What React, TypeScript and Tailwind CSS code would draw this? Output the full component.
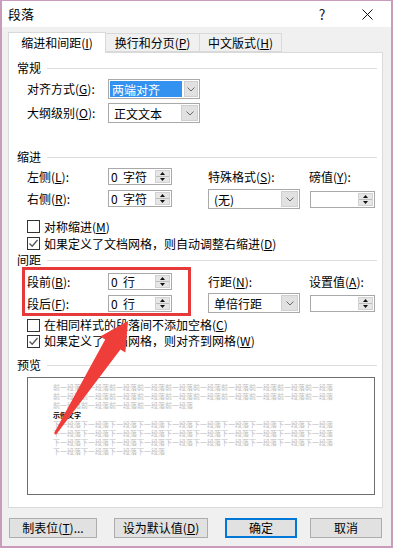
import React from "react";

const font = "font-['Noto_Sans_CJK_SC','Noto_Sans',sans-serif]";

const Key = ({ k }: { k: string }) => (
  <>
    (<u className="underline-offset-[1px]">{k}</u>)
  </>
);

const Header = ({ label, className = "" }: { label: string; className?: string }) => (
  <div className={`flex items-center h-[14px] ml-[8px] mr-[5px] ${className}`}>
    <span className="text-[12px] leading-[14px] text-black">{label}</span>
    <div className="flex-1 h-px bg-[#dedede] ml-[6px]" />
  </div>
);

const Chevron = () => (
  <svg width="8" height="5" viewBox="0 0 8 5">
    <polyline points="0.5,0.5 4,4 7.5,0.5" fill="none" stroke="#6a6a6a" strokeWidth="1" />
  </svg>
);

const Select = ({ value, active = false }: { value: string; active?: boolean }) => (
  <div className="w-[92px] h-[20px] border border-[#a9a9a9] bg-white flex">
    <div className="flex-1 flex items-center p-px">
      {active ? (
        <span className="h-full w-[72px] bg-[#3391f0] text-white text-[12px] leading-[17px] pl-[2px]">{value}</span>
      ) : (
        <span className="text-[12px] leading-[17px] pl-[4px] text-black">{value}</span>
      )}
    </div>
    <div className="w-[17px] m-px bg-[#e1e1e1] border border-[#cfcfcf] flex items-center justify-center">
      <Chevron />
    </div>
  </div>
);

const SpinArrows = () => (
  <div className="w-[15px] my-px mr-px bg-[#e6e6e6] border border-[#d2d2d2] flex flex-col">
    <div className="flex-1 flex items-center justify-center border-b border-[#bdbdbd]">
      <svg width="5" height="3" viewBox="0 0 5 3">
        <polygon points="2.5,0 5,3 0,3" fill="#111" />
      </svg>
    </div>
    <div className="flex-1 flex items-center justify-center">
      <svg width="5" height="3" viewBox="0 0 5 3">
        <polygon points="0,0 5,0 2.5,3" fill="#111" />
      </svg>
    </div>
  </div>
);

const Spin = ({ value, w = "w-[64px]" }: { value: string; w?: string }) => (
  <div className={`${w} h-[17px] border border-[#a9a9a9] bg-white flex`}>
    <div className="flex-1 flex items-center pl-[2px] text-[12px] leading-[15px] text-black whitespace-pre">{value}</div>
    <SpinArrows />
  </div>
);

const Check = ({ checked, children, h = "h-[17px]", className = "" }: { checked?: boolean; children: React.ReactNode; h?: string; className?: string }) => (
  <div className={`flex items-center ${h} ml-[18px] ${className}`}>
    <div className="w-[13px] h-[13px] border border-[#333] bg-white flex items-center justify-center">
      {checked && (
        <svg width="11" height="11" viewBox="0 0 11 11">
          <polyline points="1.5,5.5 4.2,8.2 9.5,2" fill="none" stroke="#555" strokeWidth="1.3" />
        </svg>
      )}
    </div>
    <span className="ml-[4px] text-[12px] leading-[14px] text-black whitespace-nowrap">{children}</span>
  </div>
);

const Label = ({ children, w = "w-[81px]" }: { children: React.ReactNode; w?: string }) => (
  <span className={`${w} shrink-0 text-[12px] leading-[14px] text-black whitespace-nowrap`}>{children}</span>
);

const Button = ({ children, w, primary, className = "" }: { children: React.ReactNode; w: string; primary?: boolean; className?: string }) => (
  <div
    className={`${w} h-[20px] flex items-center justify-center text-[12px] text-black bg-[#e1e1e1] ${
      primary ? "border-2 border-[#0078d7]" : "border border-[#adadad]"
    } ${className}`}
  >
    {children}
  </div>
);

const rep = (s: string, n: number) => Array.from({ length: n }, () => s).join("");

export default function App() {
  return (
    <div className={`relative w-[393px] h-[548px] ${font}`}>
      <div className="w-[393px] h-[548px] bg-[#f0f0f0] border-x-2 border-t border-b-2 border-[#c99cbb] flex flex-col">
        {/* title bar */}
        <div className="h-[26px] bg-white flex items-center pl-[6px]">
          <span className="text-[13px] text-black">段落</span>
          <div className="ml-auto w-[30px] h-full flex items-center justify-center text-[14px] text-[#222]">?</div>
          <div className="ml-[7px] mr-px w-[46px] h-full flex items-center justify-center">
            <svg width="11" height="11" viewBox="0 0 11 11">
              <path d="M0.5 0.5 L10.5 10.5 M10.5 0.5 L0.5 10.5" stroke="#111" strokeWidth="1" />
            </svg>
          </div>
        </div>

        {/* tabs */}
        <div className="h-[25px] flex items-end pl-[6px]">
          <div className="relative z-10 -mb-px w-[98px] h-[21px] bg-white border border-b-0 border-[#d9d9d9] flex items-center justify-center text-[12px] text-black">
            缩进和间距<Key k="I" />
          </div>
          <div className="w-[94px] h-[19px] border border-l-0 border-[#d9d9d9] flex items-center justify-center text-[12px] text-black">
            换行和分页<Key k="P" />
          </div>
          <div className="w-[82px] h-[19px] border border-l-0 border-[#d9d9d9] flex items-center justify-center text-[12px] text-black">
            中文版式<Key k="H" />
          </div>
        </div>

        {/* panel */}
        <div className="ml-[6px] w-[375px] h-[456px] bg-white border border-[#d9d9d9] flex flex-col">
          <Header label="常规" className="mt-[8px]" />
          <div className="mt-[4px] h-[20px] ml-[18px] flex items-center">
            <Label>
              对齐方式<Key k="G" />:
            </Label>
            <Select value="两端对齐" active />
          </div>
          <div className="mt-[4px] h-[20px] ml-[18px] flex items-center">
            <Label>
              大纲级别<Key k="O" />:
            </Label>
            <Select value="正文文本" />
          </div>

          <Header label="缩进" className="mt-[27px]" />
          <div className="mt-[4px] ml-[18px] flex">
            <div className="w-[181px] flex flex-col">
              <div className="h-[17px] flex items-center">
                <Label>
                  左侧<Key k="L" />:
                </Label>
                <Spin value="0  字符" />
              </div>
              <div className="mt-[5px] h-[17px] flex items-center">
                <Label>
                  右侧<Key k="R" />:
                </Label>
                <Spin value="0  字符" />
              </div>
            </div>
            <div className="flex flex-col">
              <div className="h-[17px] flex items-center">
                <Label w="w-[101px]">
                  特殊格式<Key k="S" />:
                </Label>
                <Label w="w-auto">
                  磅值<Key k="Y" />:
                </Label>
              </div>
              <div className="mt-[4px] h-[20px] flex items-center">
                <Select value="(无)" />
                <div className="ml-[10px]">
                  <Spin value="" w="w-[65px]" />
                </div>
              </div>
            </div>
          </div>
          <Check className="mt-[9px]">
            对称缩进<Key k="M" />
          </Check>
          <Check checked>
            如果定义了文档网格，则自动调整右缩进<Key k="D" />
          </Check>

          <Header label="间距" className="mt-[1px]" />
          <div className="mt-[6px] ml-[18px] flex">
            <div className="w-[181px] flex flex-col">
              <div className="h-[17px] flex items-center">
                <Label>
                  段前<Key k="B" />:
                </Label>
                <Spin value="0  行" />
              </div>
              <div className="mt-[5px] h-[17px] flex items-center">
                <Label>
                  段后<Key k="F" />:
                </Label>
                <Spin value="0  行" />
              </div>
            </div>
            <div className="flex flex-col">
              <div className="h-[17px] flex items-center">
                <Label w="w-[101px]">
                  行距<Key k="N" />:
                </Label>
                <Label w="w-auto">
                  设置值<Key k="A" />:
                </Label>
              </div>
              <div className="mt-[3px] h-[20px] flex items-center">
                <Select value="单倍行距" />
                <div className="ml-[10px]">
                  <Spin value="" w="w-[65px]" />
                </div>
              </div>
            </div>
          </div>
          <Check h="h-[16px]" className="mt-[4px]">
            在相同样式的段落间不添加空格<Key k="C" />
          </Check>
          <Check checked h="h-[16px]">
            如果定义了文档网格，则对齐到网格<Key k="W" />
          </Check>

          <Header label="预览" className="mt-[9px]" />
          <div className="mt-[5px] ml-[18px] w-[348px] h-[118px] border border-[#6d6d6d] bg-white pl-[25px] pt-[5px] text-[7px] leading-[9.2px] whitespace-nowrap">
            <div className="text-[#bdbdbd]">{rep("前一段落", 10)}</div>
            <div className="text-[#bdbdbd]">{rep("前一段落", 10)}</div>
            <div className="text-[#bdbdbd]">{rep("前一段落", 5)}</div>
            <div className="text-black font-bold">示例文字</div>
            <div className="text-[#bdbdbd]">{rep("下一段落", 10)}</div>
            <div className="text-[#bdbdbd]">{rep("下一段落", 10)}</div>
            <div className="text-[#bdbdbd]">{rep("下一段落", 10)}</div>
            <div className="text-[#bdbdbd]">{rep("下一段落", 4)}</div>
          </div>
        </div>

        {/* buttons */}
        <div className="mt-[10px] pl-[7px] flex">
          <Button w="w-[88px]">
            制表位<Key k="T" />...
          </Button>
          <Button w="w-[94px]" className="ml-[17px]">
            设为默认值<Key k="D" />
          </Button>
          <Button w="w-[72px]" primary className="ml-[17px]">
            确定
          </Button>
          <Button w="w-[72px]" className="ml-[13px]">
            取消
          </Button>
        </div>
      </div>

      {/* annotation overlay */}
      <svg className="absolute left-0 top-0 pointer-events-none" width="393" height="548" viewBox="0 0 393 548">
        <rect x="23.5" y="268.5" width="166" height="46" fill="none" stroke="#e6393a" strokeWidth="3" />
        <polygon
          points="128,321 125.4,352.6 120.4,349.4 56,434.7 54,433.3 105.2,339.4 100.2,336.4"
          fill="#ef3d3a"
        />
      </svg>
    </div>
  );
}
